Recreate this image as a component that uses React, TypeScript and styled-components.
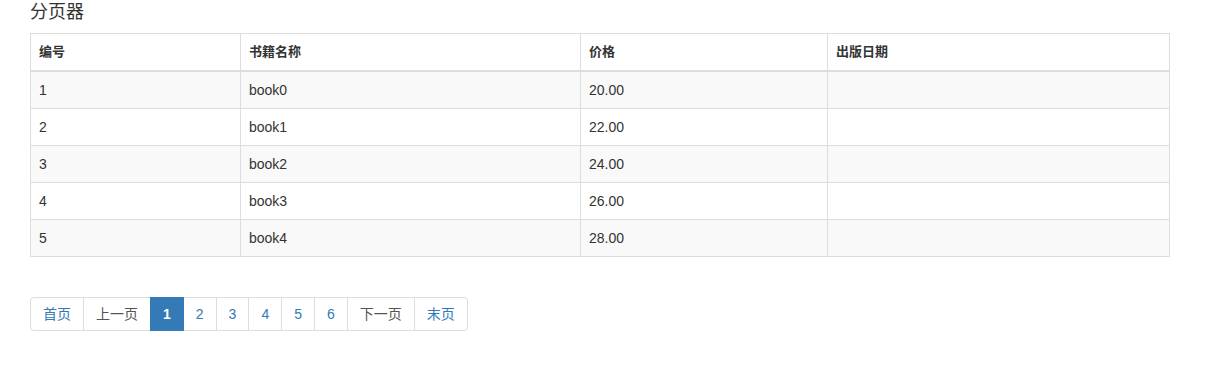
import * as React from 'react';
import styled, { createGlobalStyle } from 'styled-components';

const GlobalStyle = createGlobalStyle`
  body {
    margin: 0;
    background: #fff;
    color: #333;
    font-family: "Liberation Sans", "Noto Sans CJK SC", sans-serif;
    font-size: 14px;
    line-height: 1.42857;
  }
`;

const Page = styled.div`
  padding: 0 36px 0 30px;
`;

const Title = styled.div`
  font-size: 18px;
  line-height: 25px;
  margin-bottom: 8px;
  color: #333;
`;

const Table = styled.table`
  width: 1139px;
  table-layout: fixed;
  border-collapse: collapse;
  border-spacing: 0;
  border: 1px solid #ddd;
  font-size: 14px;
`;

const Th = styled.th<{ $w: number }>`
  box-sizing: border-box;
  width: ${p => p.$w}px;
  text-align: left;
  font-weight: bold;
  font-size: 13px;
  padding: 8px;
  line-height: 20px;
  border: 1px solid #ddd;
  border-bottom: 2px solid #ddd;
`;

const Row = styled.tr<{ $striped: boolean }>`
  background: ${p => (p.$striped ? '#f9f9f9' : '#fff')};
`;

const Td = styled.td`
  padding: 8px;
  line-height: 20px;
  border: 1px solid #ddd;
`;

const Pager = styled.ul`
  display: flex;
  list-style: none;
  margin: 40px 0 0;
  padding: 0;
`;

const PageItem = styled.li<{ $active?: boolean; $plain?: boolean }>`
  padding: 6px 12px;
  line-height: 20px;
  font-size: 14px;
  margin-left: -1px;
  border: 1px solid ${p => (p.$active ? '#337ab7' : '#ddd')};
  background: ${p => (p.$active ? '#337ab7' : '#fff')};
  color: ${p => (p.$active ? '#fff' : p.$plain ? '#555' : '#337ab7')};
  font-weight: ${p => (p.$active ? 'bold' : 'normal')};
  position: relative;
  z-index: ${p => (p.$active ? 2 : 0)};

  &:first-child {
    margin-left: 0;
    border-radius: 4px 0 0 4px;
  }
  &:last-child {
    border-radius: 0 4px 4px 0;
  }
`;

const columns = [
  { label: '编号', width: 210 },
  { label: '书籍名称', width: 340 },
  { label: '价格', width: 247 },
  { label: '出版日期', width: 342 },
];

const books = [0, 1, 2, 3, 4].map(i => ({
  id: i + 1,
  name: `book${i}`,
  price: (20 + i * 2).toFixed(2),
  date: '',
}));

const pages = [
  { label: '首页' },
  { label: '上一页', plain: true },
  { label: '1', active: true },
  { label: '2' },
  { label: '3' },
  { label: '4' },
  { label: '5' },
  { label: '6' },
  { label: '下一页', plain: true },
  { label: '末页' },
];

const App: React.FunctionComponent = () => (
  <Page>
    <GlobalStyle />
    <Title>分页器</Title>
    <Table>
      <thead>
        <tr>
          {columns.map(c => (
            <Th key={c.label} $w={c.width}>{c.label}</Th>
          ))}
        </tr>
      </thead>
      <tbody>
        {books.map((b, i) => (
          <Row key={b.id} $striped={i % 2 === 0}>
            <Td>{b.id}</Td>
            <Td>{b.name}</Td>
            <Td>{b.price}</Td>
            <Td>{b.date}</Td>
          </Row>
        ))}
      </tbody>
    </Table>
    <Pager>
      {pages.map(p => (
        <PageItem key={p.label} $active={p.active} $plain={p.plain}>
          {p.label}
        </PageItem>
      ))}
    </Pager>
  </Page>
);

export default App;
